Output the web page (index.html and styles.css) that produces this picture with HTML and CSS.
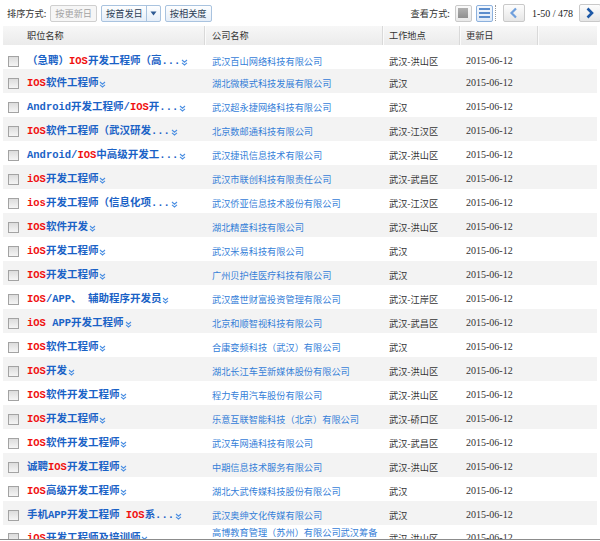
FILE: index.html
```html
<!DOCTYPE html>
<html lang="zh-CN">
<head>
<meta charset="utf-8">
<title>职位列表</title>
<link rel="stylesheet" href="styles.css">
</head>
<body>
<div class="page">
  <div class="toolbar">
    <div class="sort">
      <span class="label">排序方式:</span>
      <span class="btn disabled">按更新日</span>
      <span class="btn split"><span class="main">按首发日</span><span class="arrow"><svg width="7" height="5" viewBox="0 0 7 5"><path d="M0.5 0.5 L6.5 0.5 L3.5 4.5 Z" fill="#2f5a93"/></svg></span></span>
      <span class="btn">按相关度</span>
    </div>
    <div class="view">
      <span class="label">查看方式:</span>
      <span class="vicon block"><span class="blk"></span></span>
      <span class="vicon list active"><span class="ln"></span><span class="ln"></span><span class="ln"></span></span>
      <span class="dots"></span>
      <span class="nav prev"><svg width="22" height="18" viewBox="0 0 22 18"><path d="M13 4.5 L8.5 9 L13 13.5" fill="none" stroke="#6f9fdc" stroke-width="2.2"/></svg></span>
      <span class="pages">1-50 / 478</span>
      <span class="nav next"><svg width="22" height="18" viewBox="0 0 22 18"><path d="M8.5 4.5 L13 9 L8.5 13.5" fill="none" stroke="#1d58a6" stroke-width="2.6"/></svg></span>
    </div>
  </div>

  <table class="jobs">
    <colgroup>
      <col class="c-chk"><col class="c-title"><col class="c-co"><col class="c-loc"><col class="c-date"><col class="c-rest">
    </colgroup>
    <thead>
      <tr>
        <th colspan="2" class="h-title">职位名称</th>
        <th class="h-sep">公司名称</th>
        <th class="h-sep">工作地点</th>
        <th class="h-sep">更新日</th>
        <th class="h-sep"></th>
      </tr>
    </thead>
    <tbody>
      <tr><td class="chk"><span class="box"></span></td><td class="title"><div class="tl"><a>（急聘）<b class="kw">IOS</b>开发工程师（高...</a><svg class="more" width="7" height="7" viewBox="0 0 7 7"><path d="M1 1 L3.5 3.2 L6 1 M1 3.8 L3.5 6 L6 3.8" fill="none" stroke="#4b8fe2" stroke-width="1.1"/></svg></div></td><td class="co">武汉百山网络科技有限公司</td><td class="loc">武汉-洪山区</td><td class="date">2015-06-12</td><td></td></tr>
      <tr><td class="chk"><span class="box"></span></td><td class="title"><div class="tl"><a><b class="kw">IOS</b>软件工程师</a><svg class="more" width="7" height="7" viewBox="0 0 7 7"><path d="M1 1 L3.5 3.2 L6 1 M1 3.8 L3.5 6 L6 3.8" fill="none" stroke="#4b8fe2" stroke-width="1.1"/></svg></div></td><td class="co">湖北微模式科技发展有限公司</td><td class="loc">武汉</td><td class="date">2015-06-12</td><td></td></tr>
      <tr><td class="chk"><span class="box"></span></td><td class="title"><div class="tl"><a>Android开发工程师/<b class="kw">IOS</b>开...</a><svg class="more" width="7" height="7" viewBox="0 0 7 7"><path d="M1 1 L3.5 3.2 L6 1 M1 3.8 L3.5 6 L6 3.8" fill="none" stroke="#4b8fe2" stroke-width="1.1"/></svg></div></td><td class="co">武汉超永捷网络科技有限公司</td><td class="loc">武汉</td><td class="date">2015-06-12</td><td></td></tr>
      <tr><td class="chk"><span class="box"></span></td><td class="title"><div class="tl"><a><b class="kw">IOS</b>软件工程师（武汉研发...</a><svg class="more" width="7" height="7" viewBox="0 0 7 7"><path d="M1 1 L3.5 3.2 L6 1 M1 3.8 L3.5 6 L6 3.8" fill="none" stroke="#4b8fe2" stroke-width="1.1"/></svg></div></td><td class="co">北京数邮通科技有限公司</td><td class="loc">武汉-江汉区</td><td class="date">2015-06-12</td><td></td></tr>
      <tr><td class="chk"><span class="box"></span></td><td class="title"><div class="tl"><a>Android/<b class="kw">IOS</b>中高级开发工...</a><svg class="more" width="7" height="7" viewBox="0 0 7 7"><path d="M1 1 L3.5 3.2 L6 1 M1 3.8 L3.5 6 L6 3.8" fill="none" stroke="#4b8fe2" stroke-width="1.1"/></svg></div></td><td class="co">武汉捷讯信息技术有限公司</td><td class="loc">武汉-洪山区</td><td class="date">2015-06-12</td><td></td></tr>
      <tr><td class="chk"><span class="box"></span></td><td class="title"><div class="tl"><a><b class="kw">iOS</b>开发工程师</a><svg class="more" width="7" height="7" viewBox="0 0 7 7"><path d="M1 1 L3.5 3.2 L6 1 M1 3.8 L3.5 6 L6 3.8" fill="none" stroke="#4b8fe2" stroke-width="1.1"/></svg></div></td><td class="co">武汉市联创科技有限责任公司</td><td class="loc">武汉-武昌区</td><td class="date">2015-06-12</td><td></td></tr>
      <tr><td class="chk"><span class="box"></span></td><td class="title"><div class="tl"><a><b class="kw">ios</b>开发工程师（信息化项...</a><svg class="more" width="7" height="7" viewBox="0 0 7 7"><path d="M1 1 L3.5 3.2 L6 1 M1 3.8 L3.5 6 L6 3.8" fill="none" stroke="#4b8fe2" stroke-width="1.1"/></svg></div></td><td class="co">武汉侨亚信息技术股份有限公司</td><td class="loc">武汉-江汉区</td><td class="date">2015-06-12</td><td></td></tr>
      <tr><td class="chk"><span class="box"></span></td><td class="title"><div class="tl"><a><b class="kw">IOS</b>软件开发</a><svg class="more" width="7" height="7" viewBox="0 0 7 7"><path d="M1 1 L3.5 3.2 L6 1 M1 3.8 L3.5 6 L6 3.8" fill="none" stroke="#4b8fe2" stroke-width="1.1"/></svg></div></td><td class="co">湖北精盛科技有限公司</td><td class="loc">武汉-洪山区</td><td class="date">2015-06-12</td><td></td></tr>
      <tr><td class="chk"><span class="box"></span></td><td class="title"><div class="tl"><a><b class="kw">iOS</b>开发工程师</a><svg class="more" width="7" height="7" viewBox="0 0 7 7"><path d="M1 1 L3.5 3.2 L6 1 M1 3.8 L3.5 6 L6 3.8" fill="none" stroke="#4b8fe2" stroke-width="1.1"/></svg></div></td><td class="co">武汉米易科技有限公司</td><td class="loc">武汉</td><td class="date">2015-06-12</td><td></td></tr>
      <tr><td class="chk"><span class="box"></span></td><td class="title"><div class="tl"><a><b class="kw">IOS</b>开发工程师</a><svg class="more" width="7" height="7" viewBox="0 0 7 7"><path d="M1 1 L3.5 3.2 L6 1 M1 3.8 L3.5 6 L6 3.8" fill="none" stroke="#4b8fe2" stroke-width="1.1"/></svg></div></td><td class="co">广州贝护佳医疗科技有限公司</td><td class="loc">武汉</td><td class="date">2015-06-12</td><td></td></tr>
      <tr><td class="chk"><span class="box"></span></td><td class="title"><div class="tl"><a><b class="kw">IOS</b>/APP、 辅助程序开发员</a><svg class="more" width="7" height="7" viewBox="0 0 7 7"><path d="M1 1 L3.5 3.2 L6 1 M1 3.8 L3.5 6 L6 3.8" fill="none" stroke="#4b8fe2" stroke-width="1.1"/></svg></div></td><td class="co">武汉盛世财富投资管理有限公司</td><td class="loc">武汉-江岸区</td><td class="date">2015-06-12</td><td></td></tr>
      <tr><td class="chk"><span class="box"></span></td><td class="title"><div class="tl"><a><b class="kw">iOS</b> APP开发工程师</a><svg class="more" width="7" height="7" viewBox="0 0 7 7"><path d="M1 1 L3.5 3.2 L6 1 M1 3.8 L3.5 6 L6 3.8" fill="none" stroke="#4b8fe2" stroke-width="1.1"/></svg></div></td><td class="co">北京和顺智视科技有限公司</td><td class="loc">武汉-武昌区</td><td class="date">2015-06-12</td><td></td></tr>
      <tr><td class="chk"><span class="box"></span></td><td class="title"><div class="tl"><a><b class="kw">IOS</b>软件工程师</a><svg class="more" width="7" height="7" viewBox="0 0 7 7"><path d="M1 1 L3.5 3.2 L6 1 M1 3.8 L3.5 6 L6 3.8" fill="none" stroke="#4b8fe2" stroke-width="1.1"/></svg></div></td><td class="co">合康变频科技（武汉）有限公司</td><td class="loc">武汉</td><td class="date">2015-06-12</td><td></td></tr>
      <tr><td class="chk"><span class="box"></span></td><td class="title"><div class="tl"><a><b class="kw">IOS</b>开发</a><svg class="more" width="7" height="7" viewBox="0 0 7 7"><path d="M1 1 L3.5 3.2 L6 1 M1 3.8 L3.5 6 L6 3.8" fill="none" stroke="#4b8fe2" stroke-width="1.1"/></svg></div></td><td class="co">湖北长江车至新媒体股份有限公司</td><td class="loc">武汉-洪山区</td><td class="date">2015-06-12</td><td></td></tr>
      <tr><td class="chk"><span class="box"></span></td><td class="title"><div class="tl"><a><b class="kw">IOS</b>软件开发工程师</a><svg class="more" width="7" height="7" viewBox="0 0 7 7"><path d="M1 1 L3.5 3.2 L6 1 M1 3.8 L3.5 6 L6 3.8" fill="none" stroke="#4b8fe2" stroke-width="1.1"/></svg></div></td><td class="co">程力专用汽车股份有限公司</td><td class="loc">武汉-洪山区</td><td class="date">2015-06-12</td><td></td></tr>
      <tr><td class="chk"><span class="box"></span></td><td class="title"><div class="tl"><a><b class="kw">IOS</b>开发工程师</a><svg class="more" width="7" height="7" viewBox="0 0 7 7"><path d="M1 1 L3.5 3.2 L6 1 M1 3.8 L3.5 6 L6 3.8" fill="none" stroke="#4b8fe2" stroke-width="1.1"/></svg></div></td><td class="co">乐意互联智能科技（北京）有限公司</td><td class="loc">武汉-硚口区</td><td class="date">2015-06-12</td><td></td></tr>
      <tr><td class="chk"><span class="box"></span></td><td class="title"><div class="tl"><a><b class="kw">IOS</b>软件开发工程师</a><svg class="more" width="7" height="7" viewBox="0 0 7 7"><path d="M1 1 L3.5 3.2 L6 1 M1 3.8 L3.5 6 L6 3.8" fill="none" stroke="#4b8fe2" stroke-width="1.1"/></svg></div></td><td class="co">武汉车网通科技有限公司</td><td class="loc">武汉-武昌区</td><td class="date">2015-06-12</td><td></td></tr>
      <tr><td class="chk"><span class="box"></span></td><td class="title"><div class="tl"><a>诚聘<b class="kw">IOS</b>开发工程师</a><svg class="more" width="7" height="7" viewBox="0 0 7 7"><path d="M1 1 L3.5 3.2 L6 1 M1 3.8 L3.5 6 L6 3.8" fill="none" stroke="#4b8fe2" stroke-width="1.1"/></svg></div></td><td class="co">中期信息技术服务有限公司</td><td class="loc">武汉-洪山区</td><td class="date">2015-06-12</td><td></td></tr>
      <tr><td class="chk"><span class="box"></span></td><td class="title"><div class="tl"><a><b class="kw">IOS</b>高级开发工程师</a><svg class="more" width="7" height="7" viewBox="0 0 7 7"><path d="M1 1 L3.5 3.2 L6 1 M1 3.8 L3.5 6 L6 3.8" fill="none" stroke="#4b8fe2" stroke-width="1.1"/></svg></div></td><td class="co">湖北大武传媒科技股份有限公司</td><td class="loc">武汉</td><td class="date">2015-06-12</td><td></td></tr>
      <tr><td class="chk"><span class="box"></span></td><td class="title"><div class="tl"><a>手机APP开发工程师 <b class="kw">IOS</b>系...</a><svg class="more" width="7" height="7" viewBox="0 0 7 7"><path d="M1 1 L3.5 3.2 L6 1 M1 3.8 L3.5 6 L6 3.8" fill="none" stroke="#4b8fe2" stroke-width="1.1"/></svg></div></td><td class="co">武汉奥绅文化传媒有限公司</td><td class="loc">武汉</td><td class="date">2015-06-12</td><td></td></tr>
      <tr class="tall"><td class="chk"><span class="box"></span></td><td class="title"><div class="tl"><a><b class="kw">iOS</b>开发工程师及培训师</a><svg class="more" width="7" height="7" viewBox="0 0 7 7"><path d="M1 1 L3.5 3.2 L6 1 M1 3.8 L3.5 6 L6 3.8" fill="none" stroke="#4b8fe2" stroke-width="1.1"/></svg></div></td><td class="co wrap">高博教育管理（苏州）有限公司武汉筹备处</td><td class="loc">武汉-洪山区</td><td class="date">2015-06-12</td><td></td></tr>
    </tbody>
  </table>
</div>
</body>
</html>
```

FILE: styles.css
```css
html, body {
  margin: 0;
  padding: 0;
  background: #fff;
}

body {
  font-family: "Noto Sans CJK SC", "Noto Sans", sans-serif;
  font-size: 9.2px;
  color: #333;
}

.page {
  width: 600px;
  height: 539px;
  overflow: hidden;
  border-bottom: 1px solid #8c8c8c;
}

/* ---------- toolbar ---------- */
.toolbar {
  height: 26px;
  display: flex;
  align-items: center;
  justify-content: space-between;
  padding-left: 7px;
  margin-right: -1px;
}

.sort, .view {
  display: flex;
  align-items: center;
}

.label {
  line-height: 16px;
  color: #333;
}

.sort .label { margin-right: 4px; }
.sort .btn { margin-right: 4px; }

.btn {
  display: inline-flex;
  align-items: center;
  box-sizing: border-box;
  height: 17px;
  padding: 0 4px;
  border: 1px solid #a9c3df;
  border-radius: 2px;
  background: linear-gradient(#fdfeff, #e6eef8);
  color: #2c3e56;
  line-height: 15px;
  white-space: nowrap;
}

.btn.disabled {
  border-color: #cfcfcf;
  background: #f6f6f6;
  color: #a3a3a3;
}

.btn.split {
  padding: 0;
}

.btn.split .main {
  padding: 0 3px 0 4px;
}

.btn.split .arrow {
  display: inline-flex;
  align-items: center;
  justify-content: center;
  width: 13px;
  height: 15px;
  border-left: 1px solid #a9c3df;
}

.view .label { margin-right: 5px; }

.vicon {
  box-sizing: border-box;
  width: 17px;
  height: 17px;
  border: 1px solid #cacaca;
  border-radius: 2px;
  background: linear-gradient(#fafafa, #e9e9e9);
  display: inline-flex;
  flex-direction: column;
  align-items: center;
  justify-content: center;
  margin-right: 4px;
}

.vicon .blk {
  width: 10px;
  height: 10px;
  background: linear-gradient(#b0b0b0, #8f8f8f);
}

.vicon.active {
  border-color: #8db1dd;
  background: linear-gradient(#f4f8fd, #dfeaf8);
  gap: 2px;
  margin-right: 2px;
}

.vicon .ln {
  width: 11px;
  height: 2px;
  background: #5b8dcd;
}

.dots {
  width: 0;
  height: 16px;
  border-left: 1px dotted #9a9a9a;
  margin-right: 7px;
}

.nav {
  box-sizing: border-box;
  width: 22px;
  height: 18px;
  border: 1px solid #c9c9c9;
  border-radius: 2px;
  background: linear-gradient(#fdfdfd, #e6e6e6);
  display: inline-flex;
  align-items: center;
  justify-content: center;
}

.nav svg { display: block; margin: -1px; }

.pages {
  font-family: "Liberation Serif", serif;
  font-size: 10px;
  color: #222;
  margin: 0 6px 0 7px;
}

/* ---------- table ---------- */
.jobs {
  margin-left: 3px;
  width: 594px;
  table-layout: fixed;
  border-collapse: separate;
  border-spacing: 0;
}

.c-chk { width: 21px; }
.c-title { width: 180px; }
.c-co { width: 178px; }
.c-loc { width: 77px; }
.c-date { width: 78px; }
.c-rest { width: 60px; }

.jobs th {
  height: 19px;
  padding: 0 0 0 7px;
  background: linear-gradient(#f7f7f7, #ebebeb);
  font-weight: normal;
  text-align: left;
  line-height: 19px;
  color: #333;
  white-space: nowrap;
}

.jobs th.h-title { padding-left: 24px; }

.jobs th.h-sep {
  box-shadow: inset 1px 0 0 #d9d9d9, inset 2px 0 0 #fbfbfb;
}

.jobs th:nth-child(2) { padding-left: 8px; }

.jobs td {
  height: 16px;
  padding: 6px 0 2px 7px;
  line-height: 16px;
  vertical-align: middle;
  white-space: nowrap;
  overflow: hidden;
}

.jobs tbody tr:first-child td {
  padding-top: 8px;
  padding-bottom: 0;
}

.jobs tbody tr:nth-child(even) td {
  background: #f3f3f3;
}

.jobs td.chk {
  padding-left: 5px;
  padding-right: 0;
}

.box {
  display: block;
  box-sizing: border-box;
  width: 11px;
  height: 11px;
  border: 1px solid #a3a3a3;
  background: linear-gradient(#dcdcdc, #f5f5f5);
}

.jobs td.title {
  padding-left: 3px;
}

.tl {
  display: flex;
  align-items: center;
  height: 16px;
  overflow: visible;
  font-size: 10.5px;
  font-weight: bold;
  color: #1a62c6;
}

.tl a {
  display: block;
  height: 16px;
  line-height: 16px;
  color: #1a62c6;
  text-decoration: none;
  white-space: pre;
  font-family: "Liberation Mono", "Noto Sans CJK SC", monospace;
}

.tl .kw {
  color: #f01010;
  font-weight: bold;
}

.more {
  flex: none;
  margin: 3px 0 0 1px;
}

.jobs td.co {
  padding-left: 8px;
  color: #3580d8;
}

.jobs td.co.wrap {
  white-space: normal;
  line-height: 12px;
  padding-right: 4px;
}

.jobs tr.tall td {
  padding-top: 1px;
}

.jobs td.loc {
  color: #333;
}

.jobs td.date {
  font-family: "Liberation Serif", serif;
  font-size: 10px;
  color: #333;
}
```
